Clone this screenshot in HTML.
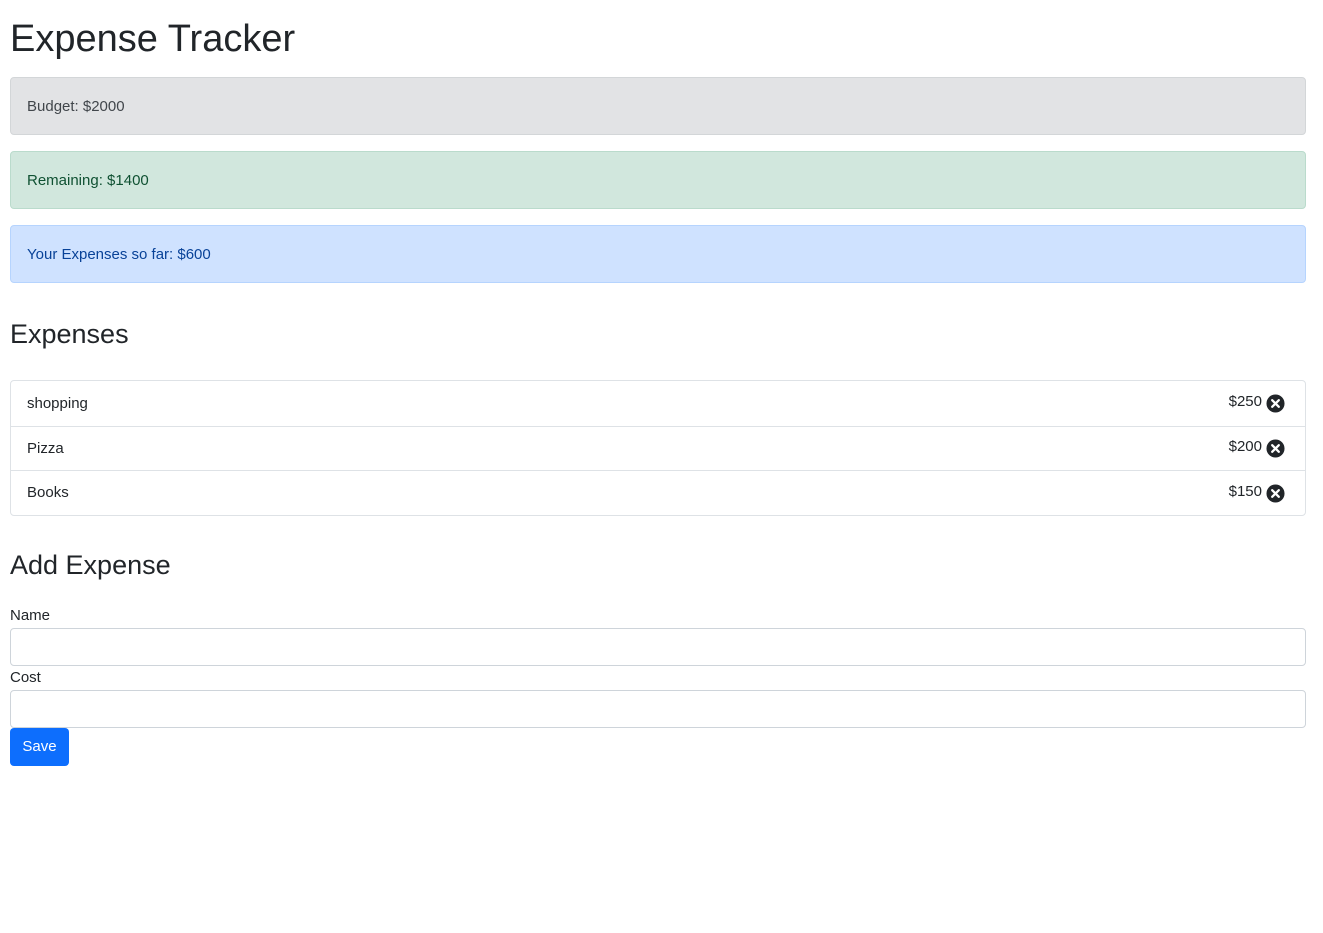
<!DOCTYPE html>
<html><head><meta charset="utf-8"><style>
*{box-sizing:border-box}
body{margin:0;font-family:"Liberation Sans",sans-serif;color:#212529;font-size:15px;background:#fff}
.c{padding:0 17px 0 10px}
h1{font-size:38px;font-weight:500;margin:0;padding-top:16px;height:77px;line-height:46px}
.al{height:58px;border:1px solid;border-radius:4px;padding:0 16px;line-height:58px;margin-bottom:16px;font-size:15px}
h3{font-size:27px;font-weight:500;margin:0;line-height:34px}
ul{list-style:none;margin:0;padding:0;border:1px solid #dee2e6;border-radius:4px}
li{height:44.5px;padding:0 20px 0 16px;display:flex;align-items:center;justify-content:space-between;border-top:1px solid #dee2e6}
li:first-child{border-top:none}
.r{display:flex;align-items:center;gap:4px;margin-top:-3px}
svg{margin-top:4px}
label{display:block;font-size:15px;line-height:24px}
input{display:block;width:100%;height:38px;border:1px solid #ced4da;border-radius:4px;margin:0}
button{background:#0d6efd;color:#fff;border:none;border-radius:4px;height:38px;width:59px;font-size:15px;font-family:inherit}
</style></head><body><div class="c">
<h1>Expense Tracker</h1>
<div class="al" style="background:#e2e3e5;border-color:#d3d6d8;color:#41464b">Budget: $2000</div>
<div class="al" style="background:#d1e7dd;border-color:#badbcc;color:#0f5132">Remaining: $1400</div>
<div class="al" style="background:#cfe2ff;border-color:#b6d4fe;color:#084298">Your Expenses so far: $600</div>
<h3 style="margin-top:34px">Expenses</h3>
<ul style="margin-top:29px">
<li><span>shopping</span><span class="r">$250<svg width="19" height="19" viewBox="0 0 20 20"><circle cx="10" cy="10" r="9.5" fill="#212529"/><path d="M6.5 6.5l7 7M13.5 6.5l-7 7" stroke="#fff" stroke-width="2.4" stroke-linecap="round"/></svg></span></li>
<li><span>Pizza</span><span class="r">$200<svg width="19" height="19" viewBox="0 0 20 20"><circle cx="10" cy="10" r="9.5" fill="#212529"/><path d="M6.5 6.5l7 7M13.5 6.5l-7 7" stroke="#fff" stroke-width="2.4" stroke-linecap="round"/></svg></span></li>
<li><span>Books</span><span class="r">$150<svg width="19" height="19" viewBox="0 0 20 20"><circle cx="10" cy="10" r="9.5" fill="#212529"/><path d="M6.5 6.5l7 7M13.5 6.5l-7 7" stroke="#fff" stroke-width="2.4" stroke-linecap="round"/></svg></span></li>
</ul>
<h3 style="margin-top:32px">Add Expense</h3>
<div style="margin-top:22px"><label>Name</label><input></div>
<div><label>Cost</label><input></div>
<button>Save</button>
</div></body></html>
